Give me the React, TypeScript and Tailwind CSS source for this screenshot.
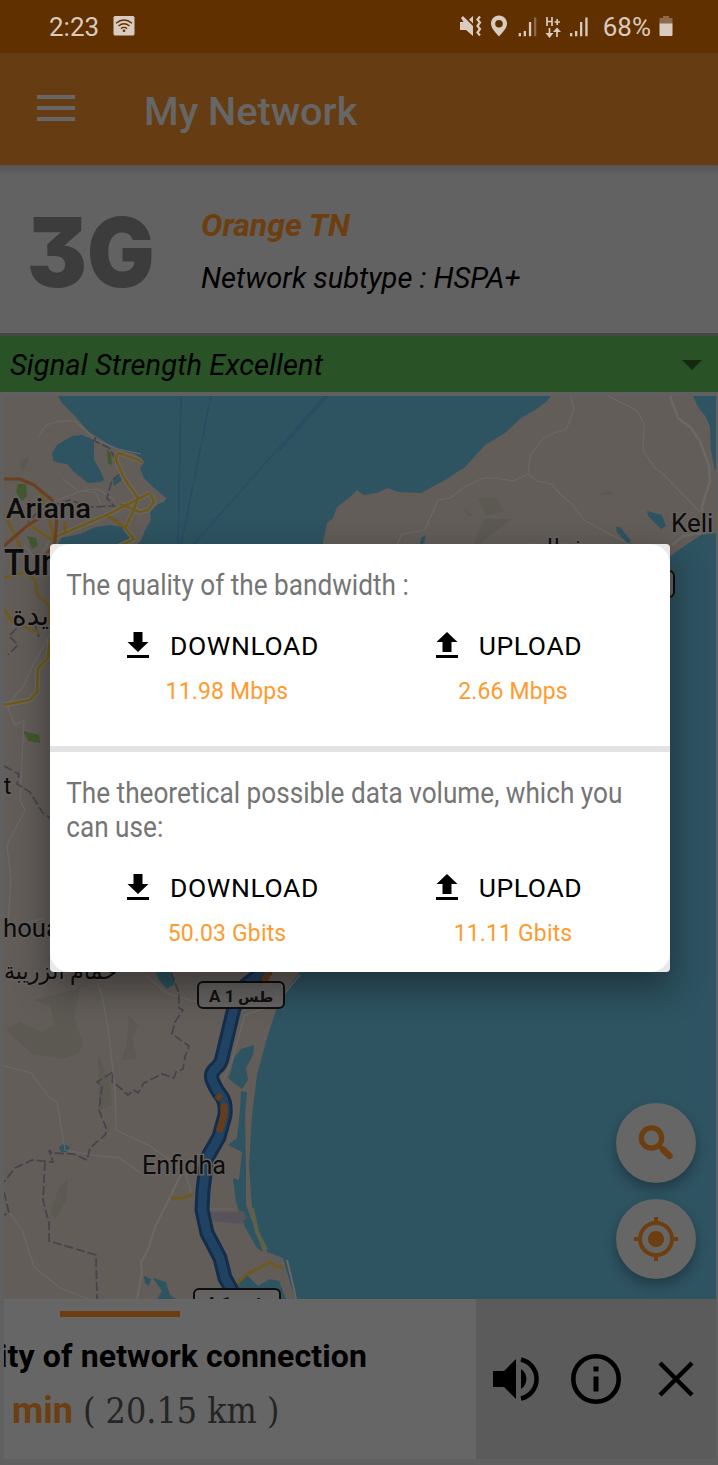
const WATER = "#2e5361";
const LAND = "#625d59";

function MapLabel({ x, y, size, children, weight = 500, length }: { x: number; y: number; size: number; children: string; weight?: number; length?: number }) {
  return (
    <text x={x} y={y} fontSize={size} fontWeight={weight} fill="#0c0c0c" stroke="#66625f" strokeWidth="3" paintOrder="stroke" textLength={length} lengthAdjust="spacingAndGlyphs">
      {children}
    </text>
  );
}

function MapView() {
  return (
    <svg className="block h-[903px] w-[712px]" viewBox="4 396 712 903" fontFamily="Roboto, 'DejaVu Sans', sans-serif">
      <rect x="4" y="396" width="712" height="903" fill={WATER} />
      <path fill={LAND} d="M4 396H58L62 403L75 416L88 431L97 437L115 448L135 454L142 459L144 463L140 468L144 478L152 486L166 498L165 501L157 505L150 512L151 520L145 530L141 541L132 548L200 600L305 960L300 972L280 998L267 1038L257 1075L252 1115L249 1165L252 1208L260 1235L267 1252L283 1258L287 1272L295 1299H4Z" />
      <path fill={LAND} d="M322 548L327 523L333 518L337 507L350 497L357 490L364 495L376 493L388 488L398 492L421 493L445 480L465 467L485 445L505 433L521 418L535 410L546 402L551 396H693L698 407L706 417L710 427L711 450L715 470L716 470V533L701 535L680 549L668 558Z" />
      {/* lagoons and lakes */}
      <g fill={WATER}>
        <path d="M52 453L57 445L72 436L82 435L94 440L94 460L101 472L104 480L101 482L88 483L74 472L67 464L60 463L53 461Z" />
        <path d="M61 538L80 534L96 527L110 525L122 527L134 540L120 550H55Z" />
        <path d="M113 480L120 476L122 480L114 486Z" />
        <path d="M155 970H168L175 978L174 984L167 989L159 980Z" />
        <path d="M234 1058L241 1049L254 1045L253 1055L246 1068L248 1080L242 1089L234 1083L228 1078L231 1071Z" />
        <path d="M241 1091L247 1092L245 1116L246 1170L246 1205L256 1232L263 1252L257 1248L245 1227L236 1202L233 1178L239 1180L242 1152L228 1145L237 1138L240 1110Z" />
        <path d="M59 1147L64 1144L70 1147L67 1152H61Z" />
        <path d="M144 1276L151 1279L149 1286L145 1283ZM153 1278L166 1282L170 1295L176 1299H157L162 1291Z" />
        <path d="M237 1281L247 1275L258 1286L270 1279L279 1281L286 1299H243Z" />
        <path d="M647 511L662 515L666 526L661 529L648 516ZM616 527L620 527L631 541L628 544L617 532ZM421 538L426 535L424 543L420 545Z" />
      </g>
      {/* vegetation and hills */}
      <g fill="#5c5953">
        <path d="M34 1000L80 988L74 1018L83 1043L78 1053L66 1058L34 1055L6 1030L20 1022L42 1032L55 1025L50 1006ZM129 1015L138 1026L132 1038L137 1059L122 1060L127 1043ZM98 1053L110 1084L112 1105L99 1110ZM60 1185L68 1180L66 1201L56 1218L50 1214Z" />
        <path d="M478 498H496L504 511L486 516ZM484 519H511L496 531L480 544H474L480 528ZM464 508L474 516H468Z" />
        <path d="M596 495L610 491L612 495ZM20 462L29 456L27 465L22 472Z" />
      </g>
      <g fill="#41582f">
        <path d="M18 484H26L27 496L22 501L16 492ZM27 536L36 538L38 546L32 549ZM23 731L39 735L40 743L28 741ZM107 449L111 454L112 465L108 463Z" />
      </g>
      <path d="M210 1212H235L243 1211L247 1217L241 1224L213 1221Z" fill="#56535a" />
      <path d="M252 1208L257 1232L266 1250" fill="none" stroke="#5d6148" strokeWidth="4" />
      {/* minor roads */}
      <g fill="none" stroke="#6b6967" strokeWidth="1.2" strokeLinejoin="round">
        <path d="M39 436L46 425L60 421H75L96 440L118 449L141 454" />
        <path d="M63 479L78 491L95 492L104 510M53 502L84 490L98 489L115 500" />
        <path d="M571 396L574 410L566 430L554 433L543 438L530 456L528 474L513 481L495 478L483 478L463 488L450 498L438 500L425 530L402 534L397 545M528 474L537 481L551 484L563 497L572 504L584 520L630 545M608 396L636 410L644 423L643 450L655 468L663 474L700 512" />
        <path d="M670 396L678 418L691 428L700 441L709 466L710 481L702 506L703 520" strokeWidth="2.5" />
        <path d="M672 545L683 536L702 533L712 526" strokeWidth="2" />
        <path d="M24 545L50 575M50 635L33 665L23 687L7 705L15 725L24 720L20 800L25 810L7 845L11 880L8 925M20 924L46 918M50 540L37 560" />
        <path d="M98 983L103 1000L109 1035L115 1090L116 1130L150 1146L170 1160L182 1172M4 1066L31 1073L50 1098L57 1102L65 1150L92 1155L120 1158L140 1173M185 1172L192 1195" />
        <path d="M10 1213L22 1230L34 1267L60 1288L88 1299M145 975L167 993L200 1003M300 975L275 1005L245 1015L232 1060L220 1088M210 1209H233" />
        <path d="M182 1172L171 1195L155 1227L148 1250L141 1262L142 1272L137 1299M287 1260L293 1285L296 1299" strokeWidth="2" />
      </g>
      {/* administrative boundaries */}
      <g fill="none" stroke="#45434b" strokeWidth="1.7" strokeDasharray="9 3">
        <path d="M95 437V441L109 448L115 458L120 474L112 480L107 498L114 506L90 507L70 500L40 510L28 522" />
        <path d="M25 620L9 636L18 645L8 655M34 622L39 637M4 766L19 774L17 784L30 792L42 812L50 818" />
        <path d="M171 972L179 993V1008L183 1010L175 1022L172 1034L189 1046L185 1057L183 1069L176 1072L174 1078L162 1074L144 1083L138 1093L134 1090L128 1095L117 1085L112 1082L113 1072L97 1082L102 1087L99 1110L107 1130L105 1135L90 1148L87 1160L73 1154L52 1153L49 1150L53 1162L32 1160L15 1168L4 1182M45 1162L43 1200L49 1223V1241L96 1255L97 1299M4 1192L9 1213L4 1215" />
      </g>
      {/* main roads */}
      <g fill="none" strokeLinejoin="round">
        <g stroke="#6c6967" strokeWidth="5">
          <path d="M115 462L118 453L139 460L142 463M116 460L124 478L138 498L133 512L125 528L134 539L115 548M55 537L107 515L150 493M120 504L140 512L148 510L154 502L151 495" />
          <path d="M4 705L30 700L37 692L38 668L48 658L50 640" />
        </g>
        <g stroke="#6e5a1c" strokeWidth="2.8">
          <path d="M115 462L118 453L139 460L142 463M116 460L124 478L138 498L133 512L125 528L134 539L115 548M55 537L107 515L150 493M120 504L140 512L148 510L154 502L151 495M107 515L125 528" />
          <path d="M4 513L14 534L22 550M40 490L55 540M65 522V534M30 525L52 540M4 705L30 700L37 692L38 668L48 658L50 640M4 609L12 622L40 633M4 578L25 572L35 580L38 596L50 606V625M171 1198H183L193 1194M236 1285L247 1274L270 1262L275 1266L284 1268" />
        </g>
        <path stroke="#6b4021" strokeWidth="3" d="M4 479L20 479L34 485L52 500L57 515L55 542L46 555M4 546L28 525L50 512" />
      </g>
      {/* ferry lines */}
      <path fill="none" stroke="#294b63" strokeWidth="1.3" d="M181 396L178 545M211 396L181 545M325 396L193 545M328 396L280 450" />
      {/* highlighted route */}
      <g fill="none" strokeLinejoin="round">
        <path stroke="#142d4b" strokeWidth="15" d="M268 968L246 985L234 1008L222 1058Q221 1064 216 1068Q209 1074 213 1082Q217 1091 222 1097Q226 1103 225 1115L219 1137L207 1158L203 1190L202 1210L207 1233L220 1258L225 1278L235 1296" />
        <path stroke="#204263" strokeWidth="9" d="M268 968L246 985L234 1008L222 1058Q221 1064 216 1068Q209 1074 213 1082Q217 1091 222 1097Q226 1103 225 1115L219 1137L207 1158L203 1190L202 1210L207 1233L220 1258L225 1278L235 1296" />
        <path stroke="#663d1b" strokeWidth="7" d="M271 966L264 982M217 1095L221 1099" />
        <path stroke="#663d1b" strokeWidth="7" strokeLinecap="round" d="M224 1106L224 1116L220 1129" />
      </g>
      <MapLabel x={6} y={518} size={27} length={85}>Ariana</MapLabel>
      <MapLabel x={4} y={575} size={36} length={107}>Tunisia</MapLabel>
      <MapLabel x={12} y={625} size={28}>يدة</MapLabel>
      <MapLabel x={-9} y={794} size={24} weight={400}>st</MapLabel>
      <MapLabel x={3} y={937} size={25} weight={400} length={86}>houaria</MapLabel>
      <MapLabel x={4} y={979} size={24} length={113}>حمام الزريبة</MapLabel>
      <MapLabel x={526} y={556} size={24} weight={400}>شتالية</MapLabel>
      <MapLabel x={671} y={532} size={26} weight={400}>Keli</MapLabel>
      <MapLabel x={142} y={1174} size={26} weight={400} length={84}>Enfidha</MapLabel>
      <g fill="#666462" stroke="#0e0e0e" strokeWidth="2">
        <rect x="198" y="982" width="86" height="26" rx="5" />
        <rect x="194" y="1289" width="86" height="26" rx="5" />
        <rect x="620" y="571" width="54" height="26" rx="5" />
      </g>
      <g fill="#111" fontSize="17" fontWeight="700">
        <text x="209" y="1002">A 1</text>
        <text x="238" y="1002" fontSize="15">طس</text>
        <text x="206" y="1309">A 1</text>
        <text x="234" y="1309" fontSize="15">طس</text>
      </g>
    </svg>
  );
}

function StatusBar() {
  return (
    <div className="flex h-[53px] items-center bg-[#603000] pr-[45px] pl-[49px] text-[#d9cbbf]">
      <span className="pt-[2px] text-[26px] leading-[51px]">2:23</span>
      <svg className="mb-[1px] ml-[14px] h-[20px] w-[22px]" viewBox="0 0 22 20">
        <rect x="0.5" width="21" height="19.5" rx="1.5" fill="#d9cbbf" />
        <g fill="none" stroke="#603000" strokeWidth="1.4">
          <path d="M3 7.2Q11 0.8 19 7.2M5.5 10Q11 5.5 16.500 10M8 12.6Q11 10.2 14 12.6" />
        </g>
        <circle cx="11" cy="14.8" r="1.3" fill="#603000" />
      </svg>
      <svg className="mb-[1px] ml-auto h-[24px] w-[132px]" viewBox="459 14 132 24" fill="#d9cbbf">
        <path d="M460 22H463.500L461 18L463 16L473 26V36L466 30H460ZM473 16V23.500L469 19.500Z" />
        <path d="M480 16.500L477.500 19.500L480 22.500L477.500 26L480 29L477.500 32.500L480 35.500" fill="none" stroke="#d9cbbf" strokeWidth="2.2" />
        <path fillRule="evenodd" d="M499 15.500C494 15.500 491 19.500 491 23.500C491 28 495 32 499 36.500C503 32 507 28 507 23.500C507 19.500 504 15.500 499 15.500ZM499 20A3.800 3.800 0 1 1 499 27.600A3.800 3.800 0 1 1 499 20Z" />
        <path d="M518.700 33H521V36.300H518.700ZM523.700 31H526V36.300H523.700ZM528.900 22H531.200V36.300H528.900ZM570 33H572.300V36.300H570ZM575 31H577.300V36.300H575ZM580 22H582.300V36.300H580ZM585.300 17.500H587.600V36.300H585.300Z" />
        <path d="M534 17.500H536.300V36.300H534Z" fill="#8c6a4b" />
        <path d="M547 17V26M552 17V26M547 21.500H552M554.500 22H560M557.200 19V25M549.500 28V35M557 37V30" stroke="#d9cbbf" strokeWidth="1.700" fill="none" />
        <path d="M545.500 33H553.500L549.500 38ZM553 32H561L557 27.500Z" />
      </svg>
      <span className="ml-[12px] pt-[2px] text-[26px] leading-[51px]">68%</span>
      <svg className="mb-[2px] ml-[8px] h-[22px] w-[14px]" viewBox="0 0 14 22">
        <path d="M4 1H10V3H13.500V9H0.500V3H4Z" fill="#8c6a4b" />
        <path d="M0.500 8.500H13.500V20Q13.500 21 12.500 21H1.500Q0.500 21 0.500 20Z" fill="#d9cbbf" />
      </svg>
    </div>
  );
}

function TransferStat({ direction, value }: { direction: "DOWNLOAD" | "UPLOAD"; value: string }) {
  return (
    <div className="flex flex-1 flex-col items-center">
      <div className="mr-[9px] flex items-center gap-[20px]">
        <svg className="mb-[3px] h-[28px] w-[24px]" viewBox="0 0 24 28">
          {direction === "DOWNLOAD" ? (
            <path d="M7.500 1H16.500V11H22.500L12 21L1.500 11H7.500Z M1 24H23V27H1Z" />
          ) : (
            <path d="M12 1L22.500 11H16.500V21H7.500V11H1.500Z M1 24H23V27H1Z" />
          )}
        </svg>
        <span className="text-[26.5px] leading-[34px] tracking-[0.6px] text-black">{direction}</span>
      </div>
      <span className="mt-[15px] text-[23px] leading-[28px] tracking-[0.15px] text-[#ff9a2e]">{value}</span>
    </div>
  );
}

function QualityDialog() {
  return (
    <div className="absolute top-[544px] left-[50px] h-[428px] w-[620px] rounded-[4px] bg-[#e9e9e9] shadow-[0_14px_34px_2px_rgba(0,0,0,0.38)]">
      <div className="h-full overflow-hidden rounded-[20px] bg-white">
        <section className="h-[202px] pt-[24px]">
          <p className="origin-left scale-x-[0.902] pl-[18px] text-[29px] leading-[34px] whitespace-nowrap text-[#757575]">The quality of the bandwidth :</p>
          <div className="mt-[27px] flex pr-[14px] pl-[34px]">
            <TransferStat direction="DOWNLOAD" value="11.98 Mbps" />
            <TransferStat direction="UPLOAD" value="2.66 Mbps" />
          </div>
        </section>
        <div className="h-[6px] bg-[#e3e3e3]" />
        <section className="pt-[24px]">
          <p className="origin-left scale-x-[0.902] pl-[18px] text-[29px] leading-[34px] whitespace-nowrap text-[#757575]">
            The theoretical possible data volume, which you<br />can use:
          </p>
          <div className="mt-[27px] flex pr-[14px] pl-[34px]">
            <TransferStat direction="DOWNLOAD" value="50.03 Gbits" />
            <TransferStat direction="UPLOAD" value="11.11 Gbits" />
          </div>
        </section>
      </div>
    </div>
  );
}

function FloatingButtons() {
  const round = "flex size-[80px] items-center justify-center rounded-full bg-[#666] shadow-[0_6px_12px_rgba(0,0,0,0.3)]";
  return (
    <div className="absolute right-[20px] bottom-[20px] flex flex-col gap-[16px]">
      <button className={round}>
        <svg className="size-[44px]" viewBox="0 0 44 44" fill="none" stroke="#6c3e10">
          <circle cx="17.500" cy="17" r="10.200" strokeWidth="5.200" />
          <path d="M25 24.500L28 28" strokeWidth="4" />
          <path d="M29 28.500L35.500 35" strokeWidth="6.500" strokeLinecap="round" />
        </svg>
      </button>
      <button className={round}>
        <svg className="size-[44px]" viewBox="0 0 44 44" fill="none" stroke="#6c3e10" strokeWidth="4">
          <circle cx="22" cy="22" r="16" />
          <circle cx="22" cy="22" r="8" fill="#6c3e10" stroke="none" />
          <path d="M22 0V6M22 38V44M0 22H6M38 22H44" />
        </svg>
      </button>
    </div>
  );
}

export default function App() {
  return (
    <div className="relative flex h-[1465px] w-[718px] flex-col overflow-hidden bg-[#606060] font-[Roboto,sans-serif]">
      <StatusBar />
      <header className="flex h-[112px] items-center bg-[#663d12] pl-[37px]">
        <svg className="mb-[2px] h-[28px] w-[38px]" viewBox="0 0 38 28"><path d="M0 3H38M0 14H38M0 25H38" stroke="#666" strokeWidth="4" /></svg>
        <h1 className="ml-[69px] pt-[5px] text-[39.7px] font-medium text-[#666]">My Network</h1>
      </header>
      <section className="flex h-[171px] border-b-[3px] border-[#464646] bg-[#626262] bg-linear-to-b from-[#555] from-0% to-[#626262] to-[6%]">
        <div className="w-[201px] pt-[31px] pl-[27px] font-[Inter,sans-serif] text-[96px] leading-[112px] font-black text-[#3c3c3c] [font-feature-settings:'cv09']"><span className="inline-block origin-left scale-x-[0.935]">3G</span></div>
        <div className="pt-[40px] italic">
          <p className="text-[32px] leading-[40px] font-bold text-[#6c3e10]">Orange TN</p>
          <p className="mt-[14px] text-[29px] leading-[38px] text-black">Network subtype : HSPA+</p>
        </div>
      </section>
      <div className="flex h-[56px] items-center justify-between bg-[#295226] pr-[16px] pl-[10px] text-[29px] tracking-[0.12px] text-black italic">
        <span className="pt-[4px]">Signal Strength Excellent</span>
        <svg className="mt-[2px] h-[10px] w-[20px]" viewBox="0 0 20 10"><path d="M0 0H20L10 10Z" fill="#162714" /></svg>
      </div>
      <main className="relative mt-[4px] ml-[4px] h-[903px] w-[712px]">
        <MapView />
        <FloatingButtons />
      </main>
      <footer className="ml-[4px] flex h-[160px] w-[712px]">
        <div className="w-[472px] overflow-hidden bg-[#666]">
          <div className="mt-[12px] ml-[56px] h-[6px] w-[120px] bg-[#6c3e10]" />
          <p className="mt-[20px] ml-[-5px] text-[32px] leading-[38px] font-bold tracking-[0.12px] whitespace-nowrap text-black">ity of network connection</p>
          <p className="mt-[17px] ml-[8px] text-[36px] leading-[38px] whitespace-nowrap">
            <span className="font-bold text-[#6c3e10]">min</span>
            <span className="ml-[10px] inline-block origin-left scale-x-[0.9] font-['DejaVu_Serif',serif] text-[35.5px] text-[#242424]">( 20.15 km )</span>
          </p>
        </div>
        <div className="flex w-[240px] items-center bg-[#5b5b5b] pl-[17px]">
          <svg className="h-[46px] w-[46px]" viewBox="0 0 46 46"><path d="M0 15H11L23 3V43L11 31H0Z" /><path d="M28 13A12 12 0 0 1 28 33Z" /><path d="M28 3.500A20 20 0 0 1 28 42.500" fill="none" stroke="#000" strokeWidth="4.500" /></svg>
          <svg className="ml-[32px] size-[50px]" viewBox="0 0 50 50" fill="none" stroke="#000"><circle cx="25" cy="25" r="22.700" strokeWidth="4.600" /><path d="M25 22.500V37.500M25 12.500V17.500" strokeWidth="5" /></svg>
          <svg className="ml-[37px] size-[36px]" viewBox="0 0 36 36"><path d="M2 2L34 34M34 2L2 34" stroke="#000" strokeWidth="4.500" /></svg>
        </div>
      </footer>
      <QualityDialog />
    </div>
  );
}
